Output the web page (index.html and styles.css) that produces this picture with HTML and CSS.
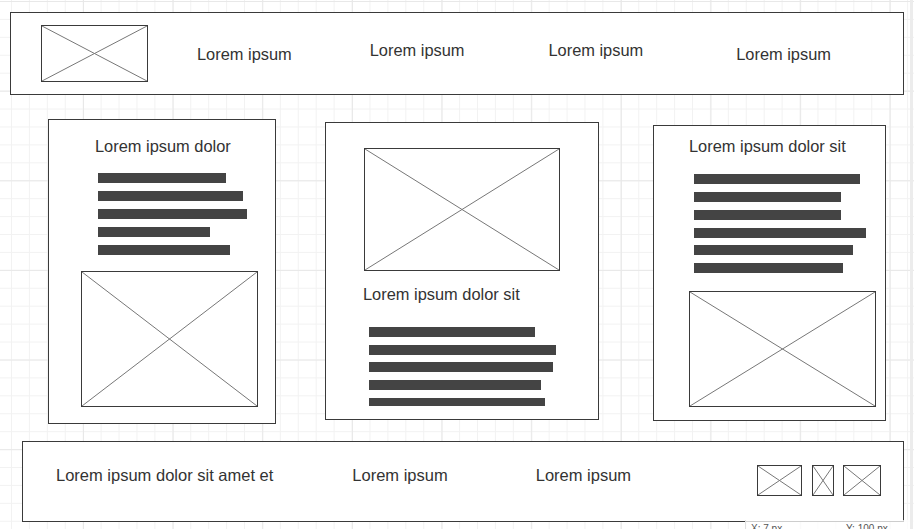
FILE: index.html
```html
<!DOCTYPE html>
<html lang="en">
<head>
<meta charset="utf-8">
<title>Wireframe</title>
<link rel="stylesheet" href="styles.css">
</head>
<body>
<div class="canvas">
  <header class="topbar">
    <div class="ph logo"><svg viewBox="0 0 100 100" preserveAspectRatio="none"><line x1="0" y1="0" x2="100" y2="100"/><line x1="100" y1="0" x2="0" y2="100"/></svg></div>
    <span class="nav nav-1">Lorem ipsum</span>
    <span class="nav nav-2">Lorem ipsum</span>
    <span class="nav nav-3">Lorem ipsum</span>
    <span class="nav nav-4">Lorem ipsum</span>
  </header>

  <main class="cards">
    <section class="card card-left">
      <h2 class="title">Lorem ipsum dolor</h2>
      <div class="bars">
        <div class="bar" style="width:128px"></div>
        <div class="bar" style="width:145px"></div>
        <div class="bar" style="width:149px"></div>
        <div class="bar" style="width:112px"></div>
        <div class="bar" style="width:132px"></div>
      </div>
      <div class="ph img"><svg viewBox="0 0 100 100" preserveAspectRatio="none"><line x1="0" y1="0" x2="100" y2="100"/><line x1="100" y1="0" x2="0" y2="100"/></svg></div>
    </section>

    <section class="card card-mid">
      <div class="ph img"><svg viewBox="0 0 100 100" preserveAspectRatio="none"><line x1="0" y1="0" x2="100" y2="100"/><line x1="100" y1="0" x2="0" y2="100"/></svg></div>
      <h2 class="title">Lorem ipsum dolor sit</h2>
      <div class="bars">
        <div class="bar" style="width:166px"></div>
        <div class="bar" style="width:187px"></div>
        <div class="bar bar-tight" style="width:184px"></div>
        <div class="bar" style="width:172px"></div>
        <div class="bar bar-short" style="width:176px"></div>
      </div>
    </section>

    <section class="card card-right">
      <h2 class="title">Lorem ipsum dolor sit</h2>
      <div class="bars">
        <div class="bar" style="width:166px"></div>
        <div class="bar" style="width:147px"></div>
        <div class="bar" style="width:147px"></div>
        <div class="bar" style="width:172px"></div>
        <div class="bar bar-tight" style="width:159px"></div>
        <div class="bar" style="width:149px"></div>
      </div>
      <div class="ph img"><svg viewBox="0 0 100 100" preserveAspectRatio="none"><line x1="0" y1="0" x2="100" y2="100"/><line x1="100" y1="0" x2="0" y2="100"/></svg></div>
    </section>
  </main>

  <footer class="footer">
    <span class="ftext ftext-1">Lorem ipsum dolor sit amet et</span>
    <span class="ftext ftext-2">Lorem ipsum</span>
    <span class="ftext ftext-3">Lorem ipsum</span>
    <div class="icons">
      <div class="ph ico ico-1"><svg viewBox="0 0 100 100" preserveAspectRatio="none"><line x1="0" y1="0" x2="100" y2="100"/><line x1="100" y1="0" x2="0" y2="100"/></svg></div>
      <div class="ph ico ico-2"><svg viewBox="0 0 100 100" preserveAspectRatio="none"><line x1="0" y1="0" x2="100" y2="100"/><line x1="100" y1="0" x2="0" y2="100"/></svg></div>
      <div class="ph ico ico-3"><svg viewBox="0 0 100 100" preserveAspectRatio="none"><line x1="0" y1="0" x2="100" y2="100"/><line x1="100" y1="0" x2="0" y2="100"/></svg></div>
    </div>
  </footer>

  <div class="coords"><span class="cx">X: 7 px</span><span class="cy">Y: 100 px</span></div>
  <div class="edge"></div>
</div>
</body>
</html>
```

FILE: styles.css
```css
html, body {
  margin: 0;
  padding: 0;
}

body {
  width: 914px;
  height: 529px;
  overflow: hidden;
  font-family: "Liberation Sans", Arial, sans-serif;
  color: #333;
  background-color: #fff;
}

.canvas {
  position: relative;
  width: 914px;
  height: 529px;
  padding-top: 12px;
  box-sizing: border-box;
  background-color: #fff;
  background-image:
    linear-gradient(to right, #e8e8e8 1px, transparent 1px),
    linear-gradient(to bottom, #e8e8e8 1px, transparent 1px),
    linear-gradient(to right, #f2f2f2 1px, transparent 1px),
    linear-gradient(to bottom, #f2f2f2 1px, transparent 1px);
  background-size: 89.65px 89.65px, 89.65px 89.65px, 17.93px 17.93px, 17.93px 17.93px;
  background-position: 83px 1px, 83px 1px, 11px 1px, 11px 1px;
}

/* placeholders */
.ph {
  box-sizing: border-box;
  border: 1px solid #3a3a3a;
  background: #fff;
  flex: none;
}
.ph svg {
  display: block;
  width: 100%;
  height: 100%;
}
.ph line {
  stroke: #777;
  stroke-width: 1;
  vector-effect: non-scaling-stroke;
}

/* header */
.topbar {
  box-sizing: border-box;
  margin-left: 10px;
  width: 894px;
  height: 83px;
  border: 1px solid #3a3a3a;
  background: #fff;
  display: flex;
  align-items: flex-start;
}
.logo {
  width: 107px;
  height: 57px;
  margin-left: 30px;
  margin-top: 12px;
}
.nav {
  font-size: 16.4px;
  line-height: 19px;
  white-space: nowrap;
}
.nav-1 { margin-left: 49px; margin-top: 32px; }
.nav-2 { margin-left: 78px; margin-top: 28px; }
.nav-3 { margin-left: 84px; margin-top: 28px; }
.nav-4 { margin-left: 93px; margin-top: 32px; }

/* cards */
.cards {
  display: flex;
  align-items: flex-start;
  margin-top: 24px;
}
.card {
  box-sizing: border-box;
  border: 1px solid #3a3a3a;
  background: #fff;
  display: flex;
  flex-direction: column;
  align-items: flex-start;
}
.title {
  margin: 0;
  font-weight: normal;
  font-size: 16.4px;
  line-height: 19px;
  white-space: nowrap;
}
.bars {
  display: flex;
  flex-direction: column;
  gap: 8px;
}
.bar {
  height: 10px;
  background: #444;
}
.bar-tight { margin-top: -1px; }
.bar-short { height: 8px; }

.card-left {
  width: 228px;
  height: 305px;
  margin-left: 48px;
}
.card-left .title { margin: 17px 0 0 46px; }
.card-left .bars { margin: 17px 0 0 49px; }
.card-left .img { width: 177px; height: 136px; margin: 16px 0 0 32px; }

.card-mid {
  width: 274px;
  height: 298px;
  margin-left: 49px;
  margin-top: 3px;
}
.card-mid .img { width: 196px; height: 123px; margin: 25px 0 0 38px; }
.card-mid .title { margin: 14px 0 0 37px; }
.card-mid .bars { margin: 23px 0 0 43px; }

.card-right {
  width: 233px;
  height: 296px;
  margin-left: 54px;
  margin-top: 6px;
}
.card-right .title { margin: 11px 0 0 35px; }
.card-right .bars { margin: 18px 0 0 40px; }
.card-right .img { width: 187px; height: 116px; margin: 18px 0 0 35px; }

/* footer */
.footer {
  box-sizing: border-box;
  margin: 17px 0 0 22px;
  width: 882px;
  height: 81px;
  border: 1px solid #3a3a3a;
  background: #fff;
  display: flex;
  align-items: flex-start;
}
.ftext {
  font-size: 16.5px;
  line-height: 19px;
  white-space: nowrap;
  margin-top: 24px;
}
.ftext-1 { margin-left: 33px; }
.ftext-2 { margin-left: 79px; }
.ftext-3 { margin-left: 88px; }
.icons {
  display: flex;
  margin-left: 126px;
  margin-top: 23px;
}
.ico { height: 31px; }
.ico-1 { width: 45px; }
.ico-2 { width: 22px; margin-left: 10px; }
.ico-3 { width: 38px; margin-left: 9px; }

/* status overlay */
.coords {
  position: absolute;
  left: 745px;
  top: 520px;
  width: 169px;
  height: 12px;
  background: rgba(255, 255, 255, 0.75);
  border-left: 1px solid #e0e0e0;
  font-size: 10px;
  line-height: 12px;
  color: #555;
}
.cx { position: absolute; left: 5px; top: 3px; }
.cy { position: absolute; left: 100px; top: 3px; }

.edge {
  position: absolute;
  right: 1px;
  top: 0;
  width: 3px;
  height: 529px;
  background: #ececec;
}
```
